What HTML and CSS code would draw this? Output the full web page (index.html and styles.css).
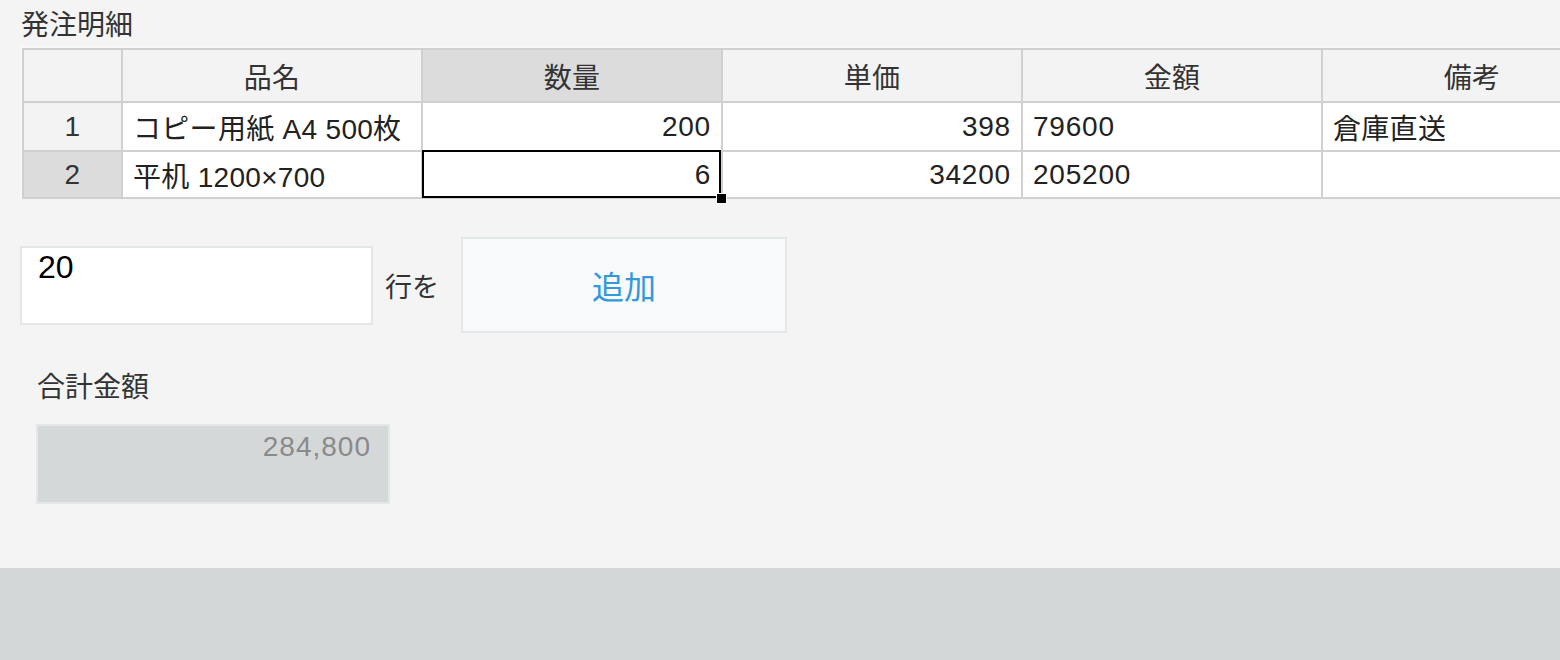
FILE: index.html
```html
<!DOCTYPE html>
<html lang="ja">
<head>
<meta charset="utf-8">
<title>発注明細</title>
<link rel="stylesheet" href="styles.css">
</head>
<body>
<div class="page">
  <div class="title">発注明細</div>
  <div class="grid-wrap">
    <div class="grid">
      <div class="hc rh first-row corner"></div>
      <div class="hc first-row">品名</div>
      <div class="hc first-row hl">数量</div>
      <div class="hc first-row">単価</div>
      <div class="hc first-row">金額</div>
      <div class="hc first-row">備考</div>

      <div class="hc rh row1">1</div>
      <div class="c row1">コピー用紙 A4 500枚</div>
      <div class="c row1 num">200</div>
      <div class="c row1 num">398</div>
      <div class="c row1 digits">79600</div>
      <div class="c row1">倉庫直送</div>

      <div class="hc rh row2 hl">2</div>
      <div class="c row2">平机 1200×700</div>
      <div class="c row2 num sel">6</div>
      <div class="c row2 num">34200</div>
      <div class="c row2 digits">205200</div>
      <div class="c row2"></div>
    </div>
  </div>

  <div class="controls">
    <div class="count-input">20</div>
    <span class="rows-label">行を</span>
    <button class="add-btn" type="button">追加</button>
  </div>

  <div class="total-label">合計金額</div>
  <div class="total-box">284,800</div>
</div>
<div class="footer-band"></div>
</body>
</html>
```

FILE: styles.css
```css
html, body {
  margin: 0;
  padding: 0;
  overflow: hidden;
}

body {
  background: #d3d7d8;
  font-family: "Liberation Sans", "Noto Sans CJK JP", sans-serif;
  color: #333;
}

.page {
  background: #f4f4f4;
  height: 568px;
  box-sizing: border-box;
  padding: 10px 0 0 20px;
  overflow: hidden;
}

.title {
  font-size: 28px;
  line-height: 32px;
  color: #333;
  padding-left: 1px;
  margin-bottom: 4px;
}

.grid-wrap {
  width: 1620px;
  border-top: 2px solid #f8f8f8;
  border-left: 2px solid #f8f8f8;
}

.grid {
  display: grid;
  grid-template-columns: 101px repeat(5, 300px);
  grid-template-rows: 55px 49px 47px;
  font-size: 28px;
  letter-spacing: 0.3px;
  color: #222;
}

.grid > div {
  box-sizing: border-box;
  border-right: 2px solid #d0d0d0;
  border-bottom: 2px solid #d0d0d0;
  display: flex;
  align-items: center;
  white-space: nowrap;
}

.grid > .first-row {
  border-top: 2px solid #d0d0d0;
}

.grid > .rh {
  border-left: 2px solid #d0d0d0;
}

.hc {
  background: #f3f3f3;
  justify-content: center;
  color: #333;
}

.hc.hl {
  background: #dcdcdc;
}

.c {
  background: #fff;
  padding: 0 10px 0 10px;
}

.c.num {
  justify-content: flex-end;
  letter-spacing: 0.8px;
  padding-right: 10px;
}

.c.digits {
  letter-spacing: 0.8px;
}

.sel {
  position: relative;
}

.sel::after {
  content: "";
  position: absolute;
  left: -1px;
  top: -2px;
  right: 0;
  bottom: -1px;
  border: 2px solid #000;
  pointer-events: none;
}

.sel::before {
  content: "";
  position: absolute;
  right: -6px;
  bottom: -7px;
  width: 9px;
  height: 9px;
  background: #000;
  border: 1px solid #fff;
  z-index: 2;
}

.controls {
  display: flex;
  align-items: center;
  margin-top: 38px;
}

.count-input {
  box-sizing: border-box;
  width: 353px;
  height: 79px;
  background: #fff;
  border: 2px solid #e3e7e8;
  font-size: 32px;
  line-height: 36px;
  padding: 1px 16px;
  color: #000;
}

.rows-label {
  font-size: 27px;
  margin-left: 12px;
  color: #333;
}

.add-btn {
  box-sizing: border-box;
  width: 326px;
  height: 96px;
  margin-left: 22px;
  background: #f7f9fa;
  border: 2px solid #e3e7e8;
  color: #3498db;
  font-family: "Liberation Sans", "Noto Sans CJK JP", sans-serif;
  font-size: 32px;
  padding: 0;
}

.total-label {
  font-size: 28px;
  line-height: 32px;
  margin: 39px 0 0 17px;
  color: #333;
}

.total-box {
  box-sizing: border-box;
  width: 354px;
  height: 80px;
  margin: 20px 0 0 16px;
  background: #d4d8d9;
  border: 2px solid #e3e7e8;
  color: #8a8a8a;
  font-size: 28px;
  line-height: 32px;
  letter-spacing: 1px;
  text-align: right;
  padding: 5px 17px 0 0;
}

.footer-band {
  height: 92px;
  background: #d3d7d8;
}
```
